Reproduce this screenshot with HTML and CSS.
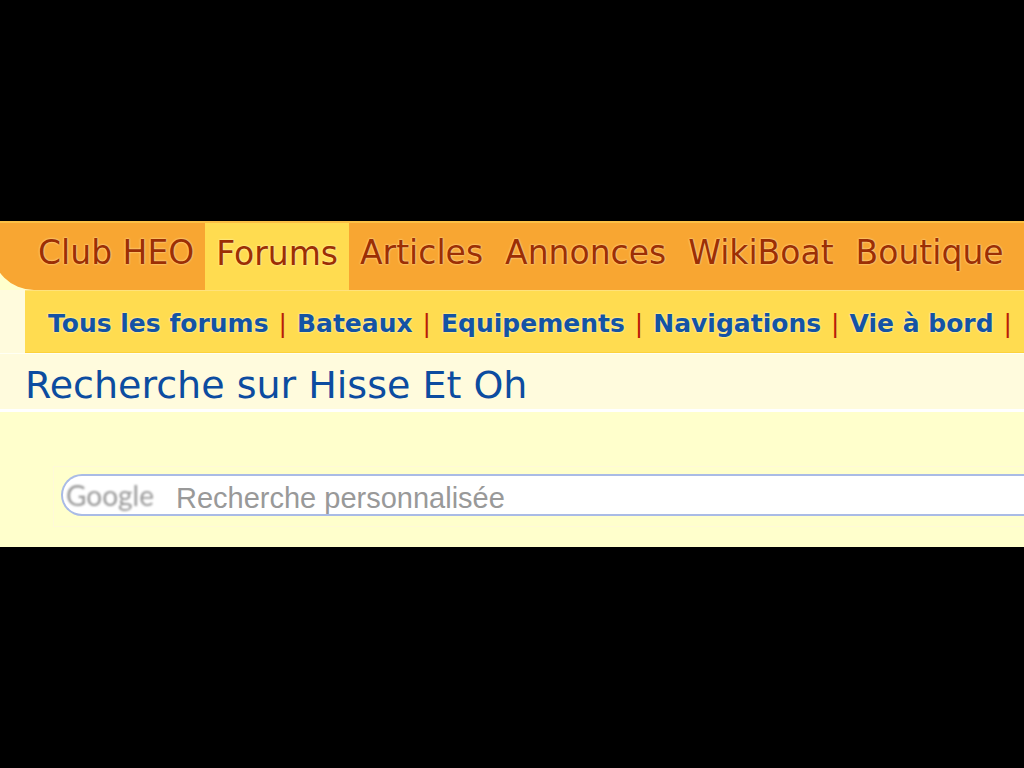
FILE: index.html
```
<!DOCTYPE html>
<html lang="fr">
<head>
    <meta charset="UTF-8">
    <meta name="viewport" content="width=device-width, initial-scale=1.0">
    <title>Hisse Et Oh - Recherche</title>
    <link rel="stylesheet" href="styles.css">
</head>
<body>
    <div class="page">
        <!-- Menu principal -->
        <div class="header">
            <nav class="main-nav">
                <a href="#">Club HEO</a>
                <a href="#" class="active">Forums</a>
                <a href="#">Articles</a>
                <a href="#">Annonces</a>
                <a href="#">WikiBoat</a>
                <a href="#">Boutique</a>
            </nav>
        </div>

        <!-- Sous-menu des forums -->
        <div class="content">
            <nav class="sub-nav">
                <a href="#">Tous les forums</a>
                <span class="sep">|</span>
                <a href="#">Bateaux</a>
                <span class="sep">|</span>
                <a href="#">Equipements</a>
                <span class="sep">|</span>
                <a href="#">Navigations</a>
                <span class="sep">|</span>
                <a href="#">Vie à bord</a>
                <span class="sep">|</span>
            </nav>
            <h1>Recherche sur Hisse Et Oh</h1>
        </div>

        <!-- Recherche Google -->
        <div class="search">
            <form class="search-box">
                <label class="google" for="q">Google</label>
                <input type="text" id="q" name="q" placeholder="Recherche personnalisée">
            </form>
        </div>
    </div>
</body>
</html>
```
FILE: styles.css
```
* {
    box-sizing: border-box;
}

body {
    margin: 0;
    min-height: 100vh;
    display: flex;
    align-items: center;
    background: #000;
    font-family: Verdana, "DejaVu Sans", sans-serif;
    overflow-x: hidden;
}

.page {
    width: 100%;
    overflow: hidden;
    background: #fffbdd;
}

a {
    text-decoration: none;
    white-space: nowrap;
}

/* Menu principal */
.header {
    background: #ffffcc;
}

.main-nav {
    display: flex;
    height: 69px;
    margin-left: -8px; /* L'arrondi déborde à gauche */
    padding-left: 35px;
    border-top: 2px solid #fcc046;
    border-bottom-left-radius: 42px;
    background: #f8a632;
}

.main-nav a {
    padding: 8px 11px 0;
    color: #9c2f04;
    font-size: 33px;
    line-height: 44px;
    text-shadow: 0 0 2px #ffd890, 0 0 2px #ffd890;
}

.main-nav .active {
    padding-top: 9px;
    background: #ffdc50;
    text-shadow: 0 0 2px #fff0a0, 0 0 2px #fff0a0;
}

/* Sous-menu */
.sub-nav {
    display: flex;
    gap: 10px;
    margin-left: 25px;
    padding: 0 23px;
    height: 63px;
    border-top: 1px solid #ffe27c;
    border-bottom: 1px solid #fdd23c;
    background: #ffdc50;
    font-size: 25px;
    line-height: 66px;
}

.sub-nav a {
    color: #1453a4;
    font-weight: bold;
    text-shadow: 0 0 2px #fff6b0, 0 0 2px #fff6b0;
}

.sep {
    color: #b81c08;
}

h1 {
    margin: 0;
    padding: 4px 25px 0;
    height: 59px;
    border-top: 1px solid #fffff4;
    border-bottom: 3px solid #fff;
    color: #0c4ca0;
    font-size: 38px;
    font-weight: normal;
    line-height: 54px;
    white-space: nowrap;
}

/* Recherche */
.search {
    padding: 54px 0 20px 53px;
    background: #ffffcc;
}

.search-box {
    position: relative;
    padding: 7px 0 10px 7px;
    border: 1px solid #fff9d8;
    border-right: 0;
}

.search-box input {
    display: block;
    width: 100%;
    height: 42px;
    padding: 6px 0 0 113px;
    border: 2px solid #a9bbe6;
    border-right: 0;
    border-radius: 21px 0 0 21px;
    background: #fff;
    font-family: "Liberation Sans", Arial, sans-serif;
    font-size: 29px;
    outline: none;
}

.search-box input::placeholder {
    color: #999;
    opacity: 1;
}

/* Logo dans le champ */
.google {
    position: absolute;
    top: 11px;
    left: 12px;
    color: #999;
    font-family: Lato, sans-serif;
    font-size: 28px;
    line-height: 34px;
    filter: blur(1px);
}
```
